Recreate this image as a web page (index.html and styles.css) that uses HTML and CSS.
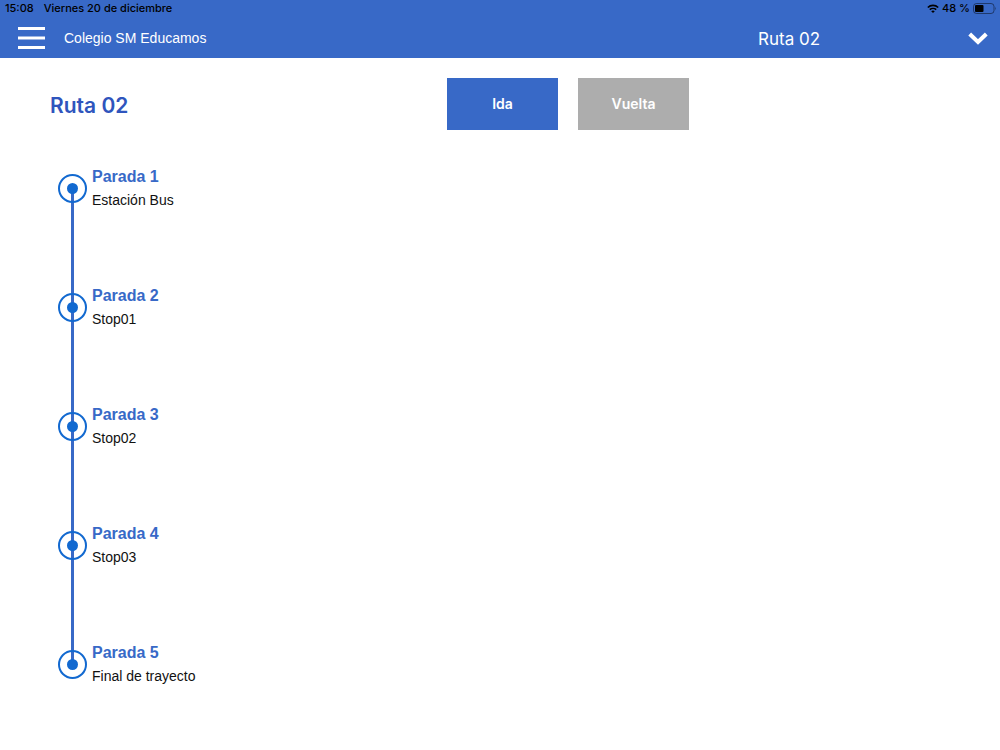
FILE: index.html
```html
<!DOCTYPE html>
<html lang="es">
<head>
<meta charset="utf-8">
<meta name="viewport" content="width=device-width, initial-scale=1">
<title>Ruta 02</title>
<link rel="stylesheet" href="styles.css">
</head>
<body>
<header class="header">
  <div class="status">
    <div class="status-left"><span>15:08</span><span>Viernes 20 de diciembre</span></div>
    <div class="status-right">
      <svg class="wifi" viewBox="0 0 12 9" aria-hidden="true"><path d="M.8 3.5a7.500 7.500 0 0 1 10.400 0M2.800 5.700a4.700 4.700 0 0 1 6.400 0" fill="none" stroke="#000" stroke-width="1.600"/><path d="M4.200 7.200a2.700 2.700 0 0 1 3.600 0L6 9z"/></svg>
      <span>48 %</span>
      <svg class="battery" viewBox="0 0 24 11" aria-hidden="true"><rect x=".5" y=".5" width="20.5" height="10" rx="3" fill="none" stroke="#000" stroke-opacity=".45"/><rect x="2" y="2" width="8.5" height="7" rx="1"/><path d="M22.200 3.800q1.400 1.700 0 3.400z" fill-opacity=".5"/></svg>
    </div>
  </div>
  <div class="navbar">
    <button class="menu" type="button" aria-label="Menú"><svg viewBox="0 0 28 24" aria-hidden="true"><path d="M0 2.500h27M0 12h27M0 21.500h27" stroke="#fff" stroke-width="3"/></svg></button>
    <span class="school">Colegio SM Educamos</span>
    <div class="picker">
      <select class="picker-select" aria-label="Ruta"><option>Ruta 02</option></select>
      <svg class="chevron" viewBox="0 0 20 13" aria-hidden="true"><path d="M1.700 2 10 10l8.300-8" fill="none" stroke="#fff" stroke-width="4"/></svg>
    </div>
  </div>
</header>
<main class="content">
  <div class="toolbar">
    <h1 class="title">Ruta 02</h1>
    <div class="directions">
      <button class="direction active" type="button">Ida</button>
      <button class="direction" type="button">Vuelta</button>
    </div>
  </div>
  <ol class="stops">
    <li class="stop"><span class="marker"></span><div><h2 class="stop-title">Parada 1</h2><p class="stop-name">Estación Bus</p></div></li>
    <li class="stop"><span class="marker"></span><div><h2 class="stop-title">Parada 2</h2><p class="stop-name">Stop01</p></div></li>
    <li class="stop"><span class="marker"></span><div><h2 class="stop-title">Parada 3</h2><p class="stop-name">Stop02</p></div></li>
    <li class="stop"><span class="marker"></span><div><h2 class="stop-title">Parada 4</h2><p class="stop-name">Stop03</p></div></li>
    <li class="stop"><span class="marker"></span><div><h2 class="stop-title">Parada 5</h2><p class="stop-name">Final de trayecto</p></div></li>
  </ol>
</main>
</body>
</html>
```

FILE: styles.css
```css
* { box-sizing: border-box; }
body { margin: 0; background: #fff; color: #111; font-family: "Liberation Sans", Arial, sans-serif; }
h1, h2, p, ol { margin: 0; padding: 0; }
button { border: 0; padding: 0; background: none; cursor: pointer; }

.header { background: #3869c7; }
.status { display: flex; justify-content: space-between; height: 16px; padding: 0 3px 0 5px; font: 500 11px/16px Inter, sans-serif; color: #000; }
.status-left { display: flex; gap: 10px; }
.status-right { display: flex; align-items: center; gap: 3px; }
.wifi { width: 12px; height: 9px; }
.battery { width: 24px; height: 11px; }

.navbar { display: grid; grid-template-columns: 28px 1fr 242px; column-gap: 18px; align-items: center; height: 42px; padding-left: 18px; padding-top: 2px; color: #fff; }
.menu { width: 28px; height: 24px; }
.menu svg { display: block; width: 28px; height: 24px; }
.school { font-size: 14px; line-height: 20px; }
.picker { position: relative; height: 40px; }
.picker-select { display: block; width: 100%; height: 40px; padding: 2px 0 0; border: 0; appearance: none; background: transparent; color: #fff; font: 400 17px/38px Inter, sans-serif; }
.chevron { position: absolute; right: 12px; top: 14px; width: 20px; height: 13px; pointer-events: none; }

.content { padding: 20px 50px; }
.toolbar { display: grid; grid-template-columns: 397px 1fr; align-items: center; }
.title { padding-top: 4px; color: #2f55bd; font: 600 21px/28px Inter, sans-serif; }
.directions { display: flex; gap: 20px; }
.direction { width: 111px; height: 52px; background: #adadad; color: #fff; font: 600 14px/20px Inter, sans-serif; }
.direction.active { background: #3869c7; }

.stops { list-style: none; padding: 36px 0 0 8px; }
.stop { position: relative; display: flex; gap: 5px; height: 119px; }
.stop:last-child { height: auto; }
.stop:not(:last-child)::before { content: ""; position: absolute; left: 13px; top: 22px; width: 3px; height: 119px; background: #3869c7; }
.marker { position: relative; flex: none; width: 29px; height: 29px; margin-top: 8px; border: 2px solid #1269d0; border-radius: 50%; }
.marker::after { content: ""; position: absolute; left: 7px; top: 7px; width: 11px; height: 11px; border-radius: 50%; background: #1269d0; }
.stop-title { color: #3869c7; font-size: 16px; line-height: 22px; }
.stop-name { font-size: 14px; line-height: 24px; }
```
